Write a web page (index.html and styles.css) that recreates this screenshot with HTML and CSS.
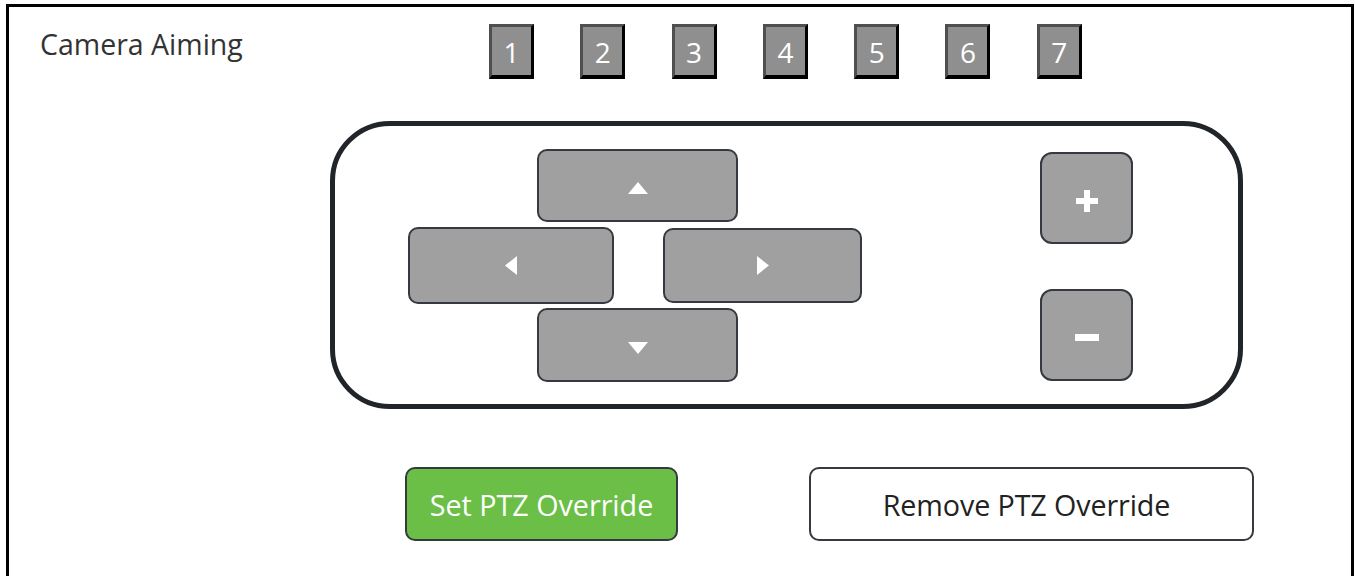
FILE: index.html
```html
<!DOCTYPE html>
<html lang="en">
<head>
    <meta charset="UTF-8">
    <meta name="viewport" content="width=device-width, initial-scale=1.0">
    <title>Camera Aiming</title>
    <link rel="stylesheet" href="styles.css">
</head>
<body>
    <div class="frame">
        <div class="top-row">
            <div class="title">Camera Aiming</div>
            <div class="presets">
                <button class="preset">1</button>
                <button class="preset">2</button>
                <button class="preset">3</button>
                <button class="preset">4</button>
                <button class="preset">5</button>
                <button class="preset">6</button>
                <button class="preset">7</button>
            </div>
        </div>

        <div class="panel">
            <div class="dpad">
                <div class="dpad-row">
                    <button class="pad-btn up" title="Up">
                        <svg class="glyph" width="20" height="12" viewBox="0 0 20 12"><polygon points="10,0 20,12 0,12" fill="#fff"/></svg>
                    </button>
                </div>
                <div class="dpad-row middle">
                    <button class="pad-btn left" title="Left">
                        <svg width="12" height="19" viewBox="0 0 12 19"><polygon points="0,9.5 12,0 12,19" fill="#fff"/></svg>
                    </button>
                    <button class="pad-btn right" title="Right">
                        <svg width="12" height="19" viewBox="0 0 12 19"><polygon points="12,9.5 0,0 0,19" fill="#fff"/></svg>
                    </button>
                </div>
                <div class="dpad-row">
                    <button class="pad-btn down" title="Down">
                        <svg class="glyph" width="20" height="12" viewBox="0 0 20 12"><polygon points="10,12 20,0 0,0" fill="#fff"/></svg>
                    </button>
                </div>
            </div>

            <div class="zoom">
                <button class="pad-btn zoom-btn" title="Zoom in">
                    <svg class="glyph" width="22" height="22" viewBox="0 0 22 22"><rect x="8" y="0" width="6" height="22" fill="#fff"/><rect x="0" y="8" width="22" height="6" fill="#fff"/></svg>
                </button>
                <button class="pad-btn zoom-btn" title="Zoom out">
                    <svg class="glyph" width="24" height="7" viewBox="0 0 24 7"><rect x="0" y="0" width="24" height="7" fill="#fff"/></svg>
                </button>
            </div>
        </div>

        <div class="actions">
            <button class="action set">Set PTZ Override</button>
            <button class="action remove">Remove PTZ Override</button>
        </div>
    </div>
</body>
</html>
```

FILE: styles.css
```css
body {
    font-family: 'Open Sans', 'Noto Sans', sans-serif;
    background-color: #ffffff;
    color: #333;
    margin: 0;
    padding: 0;
    overflow: hidden;
}

.frame {
    margin: 4px 0 0 6px;
    width: 1348px;
    height: 640px;
    box-sizing: border-box;
    border: 3px solid #000;
}

.top-row {
    display: flex;
    align-items: flex-start;
    padding: 17px 0 0 31px;
}
.title {
    width: 449px;
    font-size: 28.5px;
    line-height: 34px;
    color: #333;
    margin-top: 3px;
}
.presets {
    display: flex;
    gap: 46.3px;
}
.preset {
    width: 45px;
    height: 55px;
    box-sizing: border-box;
    padding: 2px 0 0;
    background-color: #8f8f8f;
    border-style: solid;
    border-width: 3px 3px 4px 3px;
    border-color: #4f4f4f #000 #000 #4f4f4f;
    color: #fff;
    font-family: 'Open Sans', sans-serif;
    font-size: 28px;
    line-height: 1;
    cursor: pointer;
}

.panel {
    display: flex;
    align-items: flex-start;
    margin: 42px 0 0 321px;
    width: 913px;
    height: 288px;
    box-sizing: border-box;
    border: 5px solid #212529;
    border-radius: 60px;
    padding: 23px 0 0 73px;
}

.dpad {
    width: 454px;
}
.dpad-row {
    display: flex;
    align-items: flex-start;
    padding-left: 129px;
}
.dpad-row.middle {
    padding-left: 0;
    gap: 49px;
    margin: 5px 0 4px;
}

.pad-btn {
    display: flex;
    justify-content: center;
    align-items: center;
    box-sizing: border-box;
    padding: 0;
    background-color: #a0a0a0;
    border: 2px solid #343a40;
    border-radius: 10px;
    cursor: pointer;
}
.glyph {
    margin-top: 5px;
}
.up {
    width: 201px;
    height: 73px;
}
.down {
    width: 201px;
    height: 74px;
}
.left {
    width: 206px;
    height: 77px;
}
.right {
    width: 199px;
    height: 75px;
    margin-top: 1px;
}

.zoom {
    display: flex;
    flex-direction: column;
    gap: 45px;
    margin: 3px 0 0 178px;
}
.zoom-btn {
    width: 93px;
    height: 92px;
    border-radius: 12px;
}

.actions {
    display: flex;
    gap: 131px;
    margin: 58px 0 0 396px;
}
.action {
    height: 74px;
    box-sizing: border-box;
    border: 2px solid #343a40;
    border-radius: 10px;
    font-family: 'Open Sans', sans-serif;
    font-size: 28.7px;
    cursor: pointer;
}
.set {
    width: 273px;
    background-color: #6bbf47;
    color: #fff;
}
.remove {
    width: 445px;
    padding-right: 16px;
    letter-spacing: -0.1px;
    background-color: #fff;
    color: #222;
}
```
